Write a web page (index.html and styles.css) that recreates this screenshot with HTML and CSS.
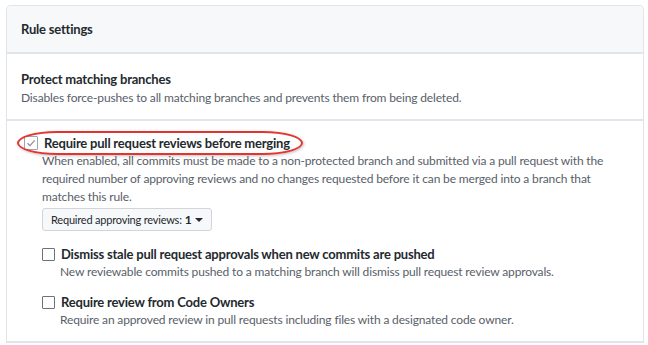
FILE: index.html
```html
<!DOCTYPE html>
<html lang="en">
  <head>
    <meta charset="UTF-8" />
    <title>Rule settings</title>
    <link rel="stylesheet" href="styles.css">
  </head>
  <body>
    <div class="box">
      <div class="box-header">
        <h3>Rule settings</h3>
      </div>

      <div class="box-row">
        <div class="title">Protect matching branches</div>
        <p class="note">Disables force-pushes to all matching branches and prevents them from being deleted.</p>
      </div>

      <div class="box-row rules">
        <div class="check-item">
          <label class="check-label">
            <span class="checkbox checked">
              <svg width="10" height="10" viewBox="0 0 10 10"><path d="M1.5 5.2 L4 7.6 L8.6 2.4" fill="none" stroke="#8a8f95" stroke-width="1.2"/></svg>
            </span>
            Require pull request reviews before merging
          </label>
          <span class="highlight"></span>
          <p class="note">When enabled, all commits must be made to a non-protected branch and submitted via a pull request with the required number of approving reviews and no changes requested before it can be merged into a branch that matches this rule.</p>

          <button class="select-btn">Required approving reviews: <b>1</b> <span class="caret"></span></button>

          <div class="check-item sub">
            <label class="check-label">
              <span class="checkbox"></span>
              Dismiss stale pull request approvals when new commits are pushed
            </label>
            <p class="note">New reviewable commits pushed to a matching branch will dismiss pull request review approvals.</p>
          </div>

          <div class="check-item sub">
            <label class="check-label">
              <span class="checkbox"></span>
              Require review from Code Owners
            </label>
            <p class="note">Require an approved review in pull requests including files with a designated code owner.</p>
          </div>
        </div>
      </div>
    </div>
  </body>
</html>
```

FILE: styles.css
```css
body {
  margin: 0;
  padding: 5px 0 0 6px;
  font-family: Lato, "Noto Sans", sans-serif;
  font-size: 13px;
  color: #24292e;
  background-color: white;
}
.box {
  width: 636px;
  border: 1px solid #e1e4e8;
  border-bottom: none;
  border-radius: 5px 5px 0 0;
}
.box-header {
  background-color: #f6f8fa;
  border-bottom: 2px solid #e1e4e8;
  border-radius: 5px 5px 0 0;
  height: 46px;
  display: flex;
  align-items: center;
  padding: 0 14px;
}
h3 {
  margin: 0;
  font-size: 13px;
  font-weight: 700;
  letter-spacing: -0.2px;
}
.box-row {
  padding: 15px 14px 12px;
  border-bottom: 2px solid #e1e4e8;
}
.title {
  font-weight: 700;
  letter-spacing: -0.2px;
  line-height: 20px;
}
.note {
  margin: 0;
  font-size: 12px;
  letter-spacing: -0.15px;
  color: #586069;
  line-height: 18px;
}
.rules {
  padding: 13px 14px 12px;
}
.check-item {
  position: relative;
  padding-left: 21px;
}
.check-label {
  display: flex;
  align-items: center;
  margin-left: -18px;
  gap: 6px;
  font-weight: 700;
  letter-spacing: -0.2px;
  line-height: 18px;
}
.checkbox {
  width: 11px;
  height: 11px;
  border: 1px solid #6a737d;
  border-radius: 1px;
  display: flex;
  align-items: center;
  justify-content: center;
  background: white;
}
.checkbox.checked {
  width: 12px;
  height: 12px;
  border-color: #a0a5ab;
}
.highlight {
  position: absolute;
  left: -4px;
  top: -3px;
  box-sizing: border-box;
  width: 286px;
  height: 24px;
  border: 2px solid #e3342f;
  border-radius: 40px / 12px;
  box-shadow: 1px 1px 3px rgba(0, 0, 0, 0.25);
}
.select-btn {
  margin: 2px 0 14px;
  height: 23px;
  padding: 0 8px;
  font-family: inherit;
  font-size: 11px;
  letter-spacing: -0.2px;
  color: #24292e;
  background-color: #f6f8fa;
  border: 1px solid #d1d5da;
  border-radius: 3px;
  display: flex;
  align-items: center;
}
.select-btn b {
  margin-left: 3px;
  font-size: 12px;
}
.caret {
  display: inline-block;
  margin-left: 3px;
  border-top: 4px solid #24292e;
  border-left: 4px solid transparent;
  border-right: 4px solid transparent;
}
.check-item.sub {
  padding-left: 18px;
}
.check-item.sub + .check-item.sub {
  margin-top: 12px;
}
```
